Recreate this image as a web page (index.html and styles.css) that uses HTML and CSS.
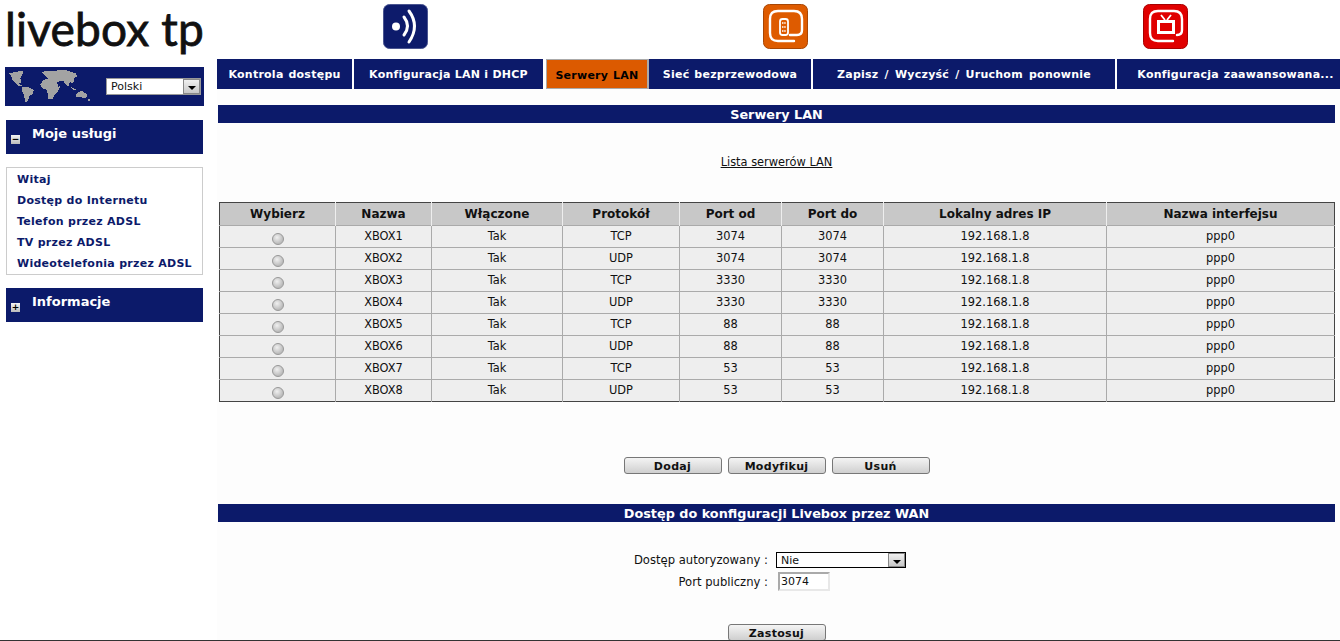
FILE: index.html
```html
<!DOCTYPE html>
<html lang="pl">
<head>
<meta charset="utf-8">
<title>Livebox</title>
<link rel="stylesheet" href="styles.css">
</head>
<body>
<div class="page">
<aside class="side">
  <div class="logo">livebox tp</div>
  <div class="lang">
    <svg class="map" width="90" height="40" viewBox="0 0 270 120" shape-rendering="crispEdges"><path fill="#a3a3a3" d="M10 22L22 20 40 16 52 14 56 22 50 28 46 38 50 48 42 52 52 60 40 60 30 50 22 40 18 30zM52 62L68 62 86 72 84 82 74 90 66 108 60 108 58 90 52 78zM108 18L130 14 150 14 180 12 212 22 216 32 208 36 206 48 200 52 196 46 190 60 182 56 176 46 164 46 156 50 160 62 166 60 158 76 146 90 144 98 130 98 126 72 112 66 106 56 114 42 128 38 120 30zM196 62L216 72 206 74zM214 84L228 74 246 84 244 96 226 94 214 94zM248 100L254 100 254 104 248 104z"/></svg>
    <div class="selectwrap lang-select"><select class="sel"><option>Polski</option></select><span class="arrow"></span></div>
  </div>
  <div class="panel"><span class="tog">−</span><span class="panel-t">Moje usługi</span></div>
  <ul class="menu">
    <li>Witaj</li>
    <li>Dostęp do Internetu</li>
    <li>Telefon przez ADSL</li>
    <li>TV przez ADSL</li>
    <li>Wideotelefonia przez ADSL</li>
  </ul>
  <div class="panel panel-b"><span class="tog">+</span><span class="panel-t">Informacje</span></div>
</aside>
<main class="main">
  <div class="icons">
    <svg class="ico" width="45" height="45" viewBox="0 0 45 45"><rect x=".5" y=".5" width="44" height="44" rx="6" fill="#0d1b6b" stroke="#4a5590"/><circle cx="13" cy="22.5" r="4" fill="#fff"/><path d="M21 13q7 9 0 18M26 7q11 15 0 31" fill="none" stroke="#fff" stroke-width="3" stroke-linecap="round"/></svg>
    <svg class="ico" width="45" height="45" viewBox="0 0 45 45"><rect x=".5" y=".5" width="44" height="44" rx="6" fill="#de5b00" stroke="#a84604"/><path d="M31 37H15Q7 37 7 29V15Q7 7 15 7H31Q39 7 39 15V26Q39 31 34 31H27" fill="none" stroke="#fff" stroke-width="2.4" stroke-linecap="round"/><rect x="17" y="15" width="8" height="16" rx="2.5" fill="none" stroke="#fff" stroke-width="1.8"/><path d="M19 19h4M19 23h4M19 27h4" stroke="#fff" stroke-width="1.6" stroke-dasharray="1.5 .7"/></svg>
    <svg class="ico" width="45" height="45" viewBox="0 0 45 45"><rect x=".5" y=".5" width="44" height="44" rx="6" fill="#e00000" stroke="#a80000"/><path d="M30 37H15Q7 37 7 29V15Q7 7 15 7H31Q39 7 39 15V26Q39 31 34 31" fill="none" stroke="#fff" stroke-width="2.4" stroke-linecap="round"/><rect x="15.500" y="17.500" width="15" height="11" fill="none" stroke="#fff" stroke-width="3"/><path d="M22 16l-4-5M24 16l4-5" stroke="#fff" stroke-width="1.8"/></svg>
  </div>
  <nav class="tabs">
    <div class="tab t1">Kontrola dostępu</div>
    <div class="tab t2">Konfiguracja LAN i DHCP</div>
    <div class="tab t3 on">Serwery LAN</div>
    <div class="tab t4">Sieć bezprzewodowa</div>
    <div class="tab t5">Zapisz / Wyczyść / Uruchom ponownie</div>
    <div class="tab t6">Konfiguracja zaawansowana...</div>
  </nav>
  <section class="content">
    <h2 class="bar">Serwery LAN</h2>
    <p class="linkline"><a class="lnk" href="#">Lista serwerów LAN</a></p>
    <table class="grid">
      <colgroup><col class="c1"><col class="c2"><col class="c3"><col class="c4"><col class="c5"><col class="c6"><col class="c7"><col class="c8"></colgroup>
      <thead><tr><th>Wybierz</th><th>Nazwa</th><th>Włączone</th><th>Protokół</th><th>Port od</th><th>Port do</th><th>Lokalny adres IP</th><th>Nazwa interfejsu</th></tr></thead>
      <tbody>
        <tr><td><input class="rad" type="radio" name="r"></td><td>XBOX1</td><td>Tak</td><td>TCP</td><td>3074</td><td>3074</td><td>192.168.1.8</td><td>ppp0</td></tr>
        <tr><td><input class="rad" type="radio" name="r"></td><td>XBOX2</td><td>Tak</td><td>UDP</td><td>3074</td><td>3074</td><td>192.168.1.8</td><td>ppp0</td></tr>
        <tr><td><input class="rad" type="radio" name="r"></td><td>XBOX3</td><td>Tak</td><td>TCP</td><td>3330</td><td>3330</td><td>192.168.1.8</td><td>ppp0</td></tr>
        <tr><td><input class="rad" type="radio" name="r"></td><td>XBOX4</td><td>Tak</td><td>UDP</td><td>3330</td><td>3330</td><td>192.168.1.8</td><td>ppp0</td></tr>
        <tr><td><input class="rad" type="radio" name="r"></td><td>XBOX5</td><td>Tak</td><td>TCP</td><td>88</td><td>88</td><td>192.168.1.8</td><td>ppp0</td></tr>
        <tr><td><input class="rad" type="radio" name="r"></td><td>XBOX6</td><td>Tak</td><td>UDP</td><td>88</td><td>88</td><td>192.168.1.8</td><td>ppp0</td></tr>
        <tr><td><input class="rad" type="radio" name="r"></td><td>XBOX7</td><td>Tak</td><td>TCP</td><td>53</td><td>53</td><td>192.168.1.8</td><td>ppp0</td></tr>
        <tr><td><input class="rad" type="radio" name="r"></td><td>XBOX8</td><td>Tak</td><td>UDP</td><td>53</td><td>53</td><td>192.168.1.8</td><td>ppp0</td></tr>
      </tbody>
    </table>
    <div class="btnrow"><button class="btn">Dodaj</button><button class="btn">Modyfikuj</button><button class="btn">Usuń</button></div>
    <h2 class="bar bar2">Dostęp do konfiguracji Livebox przez WAN</h2>
    <div class="form">
      <div class="frow"><label class="flab">Dostęp autoryzowany :</label><div class="selectwrap wan-select"><select class="sel"><option>Nie</option></select><span class="arrow"></span></div></div>
      <div class="frow frow2"><label class="flab">Port publiczny :</label><input class="inp" type="text" value="3074"></div>
    </div>
    <div class="btnrow btnrow2"><button class="btn">Zastosuj</button></div>
  </section>
</main>
</div>
</body>
</html>
```
FILE: styles.css
```css
* { box-sizing: border-box; }
html, body { margin: 0; height: 641px; overflow: hidden; background: #fff; }
body { font-family: "DejaVu Sans", Verdana, sans-serif; font-size: 11.4px; color: #111; }
.page { display: flex; height: 641px; border-bottom: 1px solid #333; overflow: hidden; }

.side { width: 217px; flex: none; }
.logo { height: 67px; padding: 0 0 0 5px; font-family: "Lato", sans-serif; font-size: 46px; line-height: 58px; color: #111; -webkit-text-stroke: .8px #111; letter-spacing: .2px; white-space: nowrap; }
.lang { margin-left: 5px; width: 199px; height: 39px; background: #0c1a6a; display: flex; align-items: flex-start; position: relative; overflow: hidden; }
.map { position: absolute; left: 0; top: -1px; }
.selectwrap { position: relative; }
.lang-select { margin: 11px 0 0 101px; width: 95px; height: 17px; }
.sel { appearance: none; -webkit-appearance: none; display: block; width: 100%; height: 100%; border: 1px solid #999; border-radius: 0; background: #fff; font: 11px "DejaVu Sans", sans-serif; color: #111; padding: 0 0 0 4px; }
.arrow { position: absolute; right: 1px; top: 1px; bottom: 1px; width: 17px; background: linear-gradient(#f0f0f0, #c8c8c8); border: 1px solid #888; }
.arrow::after { content: ""; position: absolute; left: 4px; top: 6px; border: 4px solid transparent; border-top: 4px solid #000; border-bottom: 0; }

.panel { margin: 14px 0 0 6px; width: 197px; height: 34px; background: #0c1a6a; color: #fff; position: relative; font-weight: bold; font-size: 13px; }
.panel-t { position: absolute; left: 26px; top: 6px; }
.tog { position: absolute; left: 5px; top: 15px; width: 9px; height: 9px; background: linear-gradient(#f4f4f4, #bbb); color: #000; font-size: 9px; line-height: 9px; text-align: center; }
.panel-b { margin-top: 13px; }
.menu { list-style: none; margin: 13px 0 0 6px; padding: 2px 0 0 10px; width: 197px; height: 108px; border: 1px solid #ccc; color: #0c1a6a; font-weight: bold; font-size: 11px; letter-spacing: .28px; }
.menu li { height: 21px; line-height: 19px; white-space: nowrap; }

.main { flex: 1; min-width: 0; }
.icons { height: 59px; padding: 4px 0 0 166px; display: flex; gap: 335px; }
.ico { display: block; flex: none; }
.tabs { display: flex; height: 30px; }
.tab { background: #0c1a6a; color: #fff; font-weight: bold; font-size: 11px; letter-spacing: .25px; word-spacing: .8px; display: flex; align-items: center; justify-content: center; white-space: nowrap; padding-top: 1px; }
.t1 { width: 135px; margin-right: 2px; }
.t2 { width: 189px; margin-right: 3px; word-spacing: 0; }
.t3 { width: 103px; }
.t4 { width: 162px; margin-right: 2px; }
.t5 { width: 302px; margin-right: 2px; word-spacing: 2px; }
.t6 { width: 223px; padding-left: 14px; }
.on { background: #dc5a00; color: #000; border: 1px solid #aaa; border-right-width: 2px; padding-top: 2px; }

.content { background: #fdfdfd; padding: 16px 5px 0 1px; height: 552px; }
.bar { margin: 0; height: 18px; background: #0c1a6a; color: #fff; font-size: 12.8px; line-height: 20px; font-weight: bold; text-align: center; }
.linkline { margin: 0; padding-top: 32px; height: 79px; text-align: center; line-height: 14px; }
.lnk { color: #111; }
.grid { margin-left: 1px; width: 1115px; table-layout: fixed; border-collapse: collapse; border: 1px solid #444; }
.c1 { width: 116px; } .c2 { width: 96px; } .c3 { width: 131px; } .c4 { width: 117px; }
.c5 { width: 102px; } .c6 { width: 102px; } .c7 { width: 223px; } .c8 { width: 228px; }
.grid th { height: 23px; background: #c8c8c8; border-left: 1px solid #eee; font-size: 12px; font-weight: bold; padding: 0; }
.grid th:first-child { border-left: 0; }
.grid td { height: 22px; background: #eee; border: 1px solid #aaa; text-align: center; padding: 0 0 2px; line-height: 14px; }
.grid td:first-child { border-left: 0; }
.grid td:last-child { border-right: 0; }
.grid tr:last-child td { border-bottom: 0; }
.rad { appearance: none; -webkit-appearance: none; display: block; width: 12px; height: 12px; margin: 4px auto -2px; border: 1px solid #999; border-radius: 50%; background: radial-gradient(circle at 40% 35%, #f0f0f0, #bbb 70%, #ddd); }

.btnrow { display: flex; justify-content: center; gap: 6px; margin-top: 55px; }
.btn { width: 98px; height: 17px; padding: 2px 0 0; border: 1px solid #777; border-radius: 3px; background: linear-gradient(#f4f4f4, #cfcfcf); font: bold 11px "DejaVu Sans", sans-serif; letter-spacing: .3px; color: #111; line-height: 14px; }
.bar2 { margin-top: 30px; }
.form { padding-top: 30px; }
.frow { display: flex; align-items: center; height: 16px; padding-left: 395px; }
.frow2 { height: 19px; margin-top: 4px; }
.flab { width: 155px; font-size: 11.6px; text-align: right; white-space: nowrap; flex: none; }
.wan-select { margin-left: 8px; width: 130px; height: 16px; }
.wan-select .sel { border-color: #000; }
.inp { margin-left: 10px; width: 52px; height: 19px; border: 2px solid #e8e8e8; border-top-color: #aaa; border-left-color: #aaa; background: #fff; font: 11px "DejaVu Sans", sans-serif; padding: 0 0 0 1px; color: #111; }
.btnrow2 { margin-top: 33px; }
```
